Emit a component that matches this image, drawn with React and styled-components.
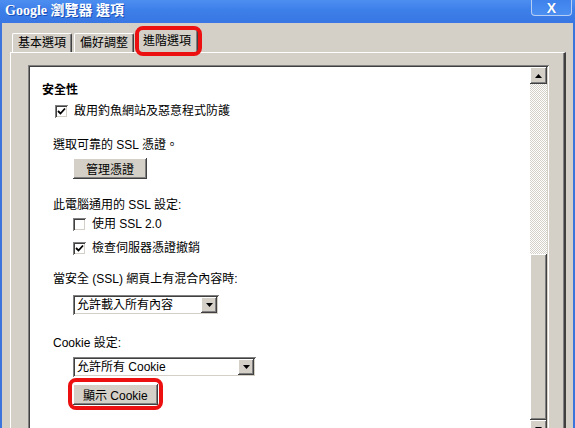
import React from 'react';
import styled, { createGlobalStyle, css } from 'styled-components';

const GlobalStyle = createGlobalStyle`
    html, body {
        margin: 0;
        padding: 0;
        background: #d4d0c8;
    }
    body {
        font-family: "Liberation Sans", "Noto Sans CJK TC", sans-serif;
        font-size: 12px;
        color: #000;
    }
`

const raised = css`
    box-shadow: inset -1px -1px #404040, inset 1px 1px #fff, inset -2px -2px #808080;
`
const sunken = css`
    box-shadow: inset 1px 1px #808080, inset -1px -1px #fff, inset 2px 2px #404040, inset -2px -2px #d4d0c8;
`

const Window = styled.div`
    width: 575px;
    height: 428px;
    overflow: hidden;
    background: #d4d0c8;
    display: flex;
    flex-direction: column;
`
const TitleBar = styled.div`
    height: 23px;
    flex: none;
    display: flex;
    justify-content: space-between;
    background: linear-gradient(180deg, #4c8ef0 0%, #3d7fe9 45%, #3776e3 100%);
    color: #fff;
`
const Title = styled.div`
    padding: 2px 0 0 5px;
    font-family: "Liberation Serif", "Noto Sans CJK TC", serif;
    font-weight: bold;
    font-size: 14px;
    line-height: 18px;
    text-shadow: 1px 1px 0 #1a4fb8;
`
const CloseButton = styled.div`
    width: 41px;
    height: 16px;
    margin-right: 3px;
    box-sizing: border-box;
    border: 1px solid #b6cdf4;
    border-top: none;
    border-radius: 0 0 4px 4px;
    background: linear-gradient(180deg, #3f82ec, #4c8ff2);
    display: flex;
    align-items: center;
    justify-content: center;
    font-family: "Liberation Sans", sans-serif;
    font-weight: bold;
    font-size: 14px;
    color: #fff;
    text-shadow: 0 0 1px #2a5fc8;
`
const Body = styled.div`
    flex: 1;
    display: flex;
    flex-direction: column;
    border-left: 2px solid #3a74dc;
    border-right: 2px solid #3a74dc;
    padding: 6px 7px 0 8px;
    min-height: 0;
`
const TabRow = styled.div`
    display: flex;
    align-items: flex-end;
    gap: 2px;
    margin-left: 2px;
    position: relative;
    z-index: 1;
`
const Tab = styled.div`
    position: relative;
    box-sizing: border-box;
    height: ${p => (p.$active ? '24px' : '19px')};
    padding: ${p => (p.$active ? '3px 6px 0' : '1px 5px 0')};
    margin-bottom: ${p => (p.$active ? '-1px' : '0')};
    background: #d4d0c8;
    border-top: 1px solid #fff;
    border-left: 1px solid #fff;
    border-right: 1px solid #404040;
    border-radius: 2px 2px 0 0;
    box-shadow: inset -1px 0 #808080;
    line-height: 16px;
    white-space: nowrap;

    ${p => p.$marked && css`
        &:after {
            content: '';
            position: absolute;
            top: -4px;
            left: -2px;
            right: -5px;
            bottom: -3px;
            border: 4px solid #ec1010;
            border-radius: 8px;
        }
    `}
`
const Panel = styled.div`
    flex: 1;
    display: flex;
    border-top: 1px solid #fff;
    border-left: 1px solid #fff;
    border-right: 2px solid #404040;
    box-shadow: inset -1px 0 #808080;
    padding: 12px 15px 0 17px;
    min-height: 0;
`
const ScrollBox = styled.div`
    flex: 1;
    display: flex;
    padding: 2px 2px 0 2px;
    height: 420px;
    flex-shrink: 0;
    ${sunken}
    background: #fff;
`
const Content = styled.div`
    flex: 1;
    display: flex;
    flex-direction: column;
    align-items: flex-start;
    padding: 15px 0 0 12px;
    background: #fff;
`
const ScrollBar = styled.div`
    width: 17px;
    display: flex;
    flex-direction: column;
`
const ScrollButton = styled.div`
    width: 17px;
    height: 17px;
    flex: none;
    background: #d4d0c8;
    ${raised}
    display: flex;
    align-items: center;
    justify-content: center;
`
const Track = styled.div`
    height: ${p => p.$h}px;
    flex: none;
    background: repeating-conic-gradient(#fff 0 25%, #d4d0c8 0 50%) 0 0 / 2px 2px;
`
const Thumb = styled.div`
    height: ${p => p.$h}px;
    flex: none;
    background: #d4d0c8;
    ${raised}
`
const Heading = styled.div`
    font-weight: bold;
    line-height: 16px;
`
const Label = styled.div`
    margin: ${p => p.$mt || 0}px 0 0 ${p => p.$indent || 11}px;
    line-height: 16px;
    white-space: nowrap;
`
const CheckRow = styled.label`
    display: flex;
    align-items: center;
    gap: 6px;
    margin: ${p => p.$mt || 0}px 0 0 ${p => p.$indent}px;
    line-height: 16px;
    white-space: nowrap;
`
const Box = styled.span`
    width: 13px;
    height: 13px;
    flex: none;
    box-sizing: border-box;
    background: #fff;
    ${sunken}
    display: flex;
    align-items: center;
    justify-content: center;
`
const Button = styled.div`
    position: relative;
    margin: ${p => p.$mt || 0}px 0 0 31px;
    height: 21px;
    min-width: 74px;
    box-sizing: border-box;
    padding: 0 10px;
    background: #d4d0c8;
    ${raised}
    display: flex;
    align-items: center;
    justify-content: center;
    white-space: nowrap;

    ${p => p.$marked && css`
        &:after {
            content: '';
            position: absolute;
            top: -6px;
            left: -5px;
            right: -5px;
            bottom: -5px;
            border: 4px solid #ec1010;
            border-radius: 8px;
        }
    `}
`
const Select = styled.div`
    margin: ${p => p.$mt || 0}px 0 0 31px;
    width: ${p => p.$w}px;
    height: 20px;
    box-sizing: border-box;
    padding: 2px;
    ${sunken}
    background: #fff;
    display: flex;
    align-items: center;
`
const SelectText = styled.span`
    flex: 1;
    padding-left: 2px;
    line-height: 16px;
    white-space: nowrap;
`
const DropButton = styled.span`
    width: 16px;
    height: 16px;
    flex: none;
    background: #d4d0c8;
    ${raised}
    display: flex;
    align-items: center;
    justify-content: center;
`

const Check = () => (
    <svg width="9" height="9" viewBox="0 0 9 9">
        <path d="M1 4 L3.5 6.5 L8 1.5" fill="none" stroke="#000" strokeWidth="1.8" />
    </svg>
)

const Arrow = ({ up }) => (
    <svg width="7" height="4" viewBox="0 0 7 4">
        <path d={up ? 'M3.5 0 L7 4 H0 Z' : 'M0 0 H7 L3.5 4 Z'} fill="#000" />
    </svg>
)

function CheckBox({ checked, indent, mt, children }) {
    return (
        <CheckRow $indent={indent} $mt={mt}>
            <Box>{checked && <Check />}</Box>
            {children}
        </CheckRow>
    )
}

function Dropdown({ width, mt, children }) {
    return (
        <Select $w={width} $mt={mt}>
            <SelectText>{children}</SelectText>
            <DropButton><Arrow /></DropButton>
        </Select>
    )
}

export default function App() {
    return (
        <>
            <GlobalStyle />
            <Window>
                <TitleBar>
                    <Title>Google 瀏覽器 選項</Title>
                    <CloseButton>X</CloseButton>
                </TitleBar>
                <Body>
                    <TabRow>
                        <Tab>基本選項</Tab>
                        <Tab>偏好調整</Tab>
                        <Tab $active $marked>進階選項</Tab>
                    </TabRow>
                    <Panel>
                        <ScrollBox>
                            <Content>
                                <Heading>安全性</Heading>
                                <CheckBox indent={13} mt={5} checked>啟用釣魚網站及惡意程式防護</CheckBox>
                                <Label $mt={18}>選取可靠的 SSL 憑證。</Label>
                                <Button $mt={5}>管理憑證</Button>
                                <Label $mt={18}>此電腦通用的 SSL 設定:</Label>
                                <CheckBox indent={31} mt={3}>使用 SSL 2.0</CheckBox>
                                <CheckBox indent={31} mt={8} checked>檢查伺服器憑證撤銷</CheckBox>
                                <Label $mt={15}>當安全 (SSL) 網頁上有混合內容時:</Label>
                                <Dropdown width={146} mt={8}>允許載入所有內容</Dropdown>
                                <Label $mt={20}>Cookie 設定:</Label>
                                <Dropdown width={183} mt={6}>允許所有 Cookie</Dropdown>
                                <Button $mt={7} $marked>顯示 Cookie</Button>
                            </Content>
                            <ScrollBar>
                                <ScrollButton><Arrow up /></ScrollButton>
                                <Track $h={170} />
                                <Thumb $h={166} />
                                <ScrollButton><Arrow /></ScrollButton>
                            </ScrollBar>
                        </ScrollBox>
                    </Panel>
                </Body>
            </Window>
        </>
    )
}
